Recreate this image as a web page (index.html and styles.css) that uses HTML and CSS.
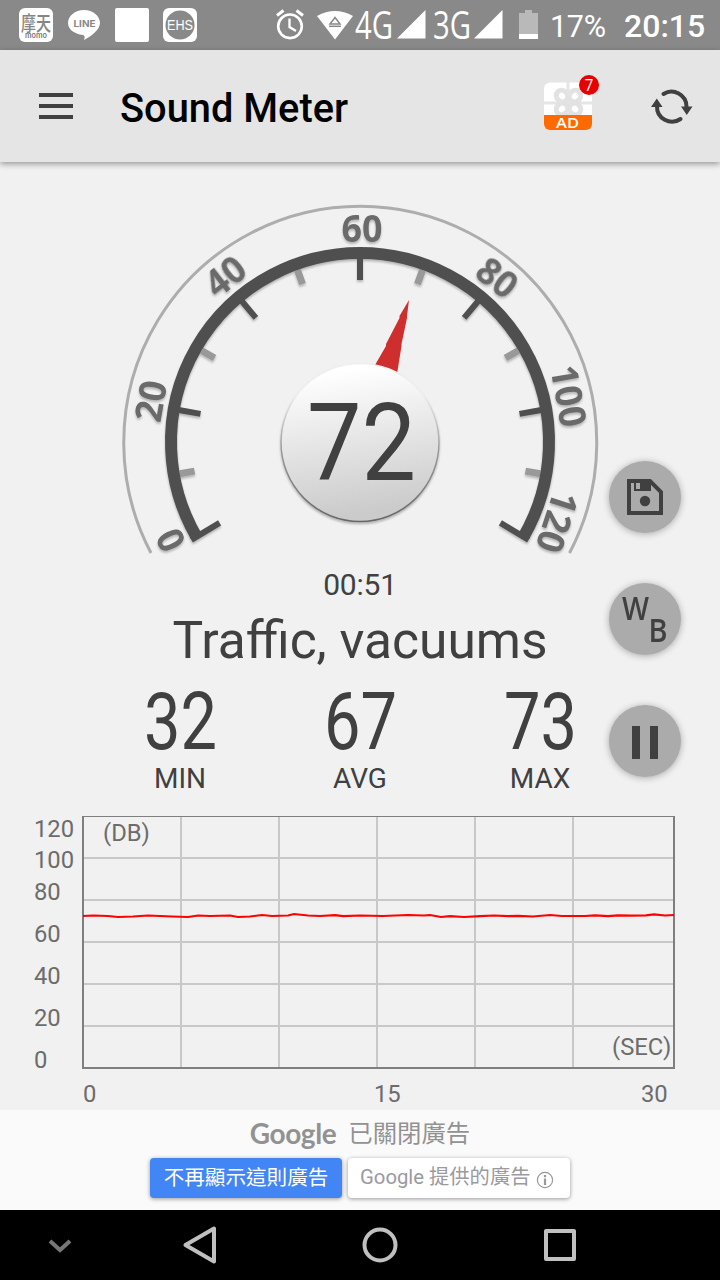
FILE: index.html
```html
<!DOCTYPE html>
<html lang="zh-Hant">
<head>
<meta charset="utf-8">
<title>Sound Meter</title>
<link rel="stylesheet" href="styles.css">
</head>
<body>
<div class="phone">
  <div class="status">
    <svg class="status-left" viewBox="0 0 260 50">
      <rect x="19" y="8" width="34" height="34" rx="6" fill="#fff"/>
      <text class="cjk" x="21" y="30.500" font-size="20" font-weight="500" fill="#858585" textLength="30" lengthAdjust="spacingAndGlyphs">摩天</text>
      <text class="inter" x="25" y="38" font-size="7.500" font-weight="600" fill="#777" textLength="22" lengthAdjust="spacingAndGlyphs">momo</text>
      <path d="M84 10c9 0 16 6 16 13 0 6-8 13-16 17 1-3 1-4-1-5-9-1-15-6-15-12 0-7 7-13 16-13z" fill="#fff"/>
      <text class="inter" x="73.500" y="27" font-size="9" font-weight="700" fill="#888" textLength="22" lengthAdjust="spacingAndGlyphs">LINE</text>
      <rect x="115" y="8" width="34" height="34" rx="2" fill="#fff"/>
      <rect x="163" y="8" width="34" height="34" rx="6" fill="#fff"/>
      <circle cx="180" cy="25" r="14.500" fill="#898989"/>
      <text class="arial" x="167" y="30" font-size="14" fill="#fff" textLength="26" lengthAdjust="spacingAndGlyphs">EHS</text>
    </svg>
    <svg class="status-right" viewBox="260 0 290 50">
      <g fill="none" stroke="#fff" stroke-width="2.600">
        <circle cx="290" cy="26.300" r="11.800"/>
        <path d="M289.500 18.500v8.500l6.500 4" stroke-width="2.300"/>
        <path d="M277 15.500l6.500-5M303 15.500l-6.500-5" stroke-width="3"/>
      </g>
      <path d="M317 16q18-10 36 0l-18 23.500z" fill="#fff"/>
      <path d="M330 24l5-6.500 5 6.500z" fill="none" stroke="#898989" stroke-width="1.500"/>
      <path d="M329 26.300h12" stroke="#898989" stroke-width="1.500"/>
      <text class="open" x="355" y="39" font-size="37.500" font-weight="500" fill="#fff" textLength="38" lengthAdjust="spacingAndGlyphs">4G</text>
      <path d="M397 38.500L425.500 10v28.500z" fill="#fff"/>
      <text class="open" x="433" y="39" font-size="37.500" font-weight="500" fill="#fff" textLength="38" lengthAdjust="spacingAndGlyphs">3G</text>
      <path d="M474 38.500L502.500 10v28.500z" fill="#fff"/>
      <path d="M525 10h7v3h6v26h-19V13h6z" fill="#b9b9b9"/>
      <path d="M519 34h19v5h-19z" fill="#fff"/>
    </svg>
    <span class="battery">17%</span>
    <span class="clock">20:15</span>
  </div>

  <header class="appbar">
    <div class="menu"><i></i><i></i><i></i></div>
    <h1>Sound Meter</h1>
    <svg class="bar-icons" viewBox="530 50 190 112">
      <rect x="544" y="82.500" width="48" height="47.500" rx="6" fill="#fff"/>
      <path d="M568 82v34M544 103h48" stroke="#e5e5e5" stroke-width="3"/>
      <g fill="#fff" stroke="#e2e2e2" stroke-width="5">
        <ellipse cx="562" cy="96" rx="6" ry="5.500" transform="rotate(45 562 96)"/>
        <ellipse cx="575" cy="96" rx="6" ry="5.500" transform="rotate(-45 575 96)"/>
        <ellipse cx="562" cy="109" rx="6" ry="5.500" transform="rotate(-45 562 109)"/>
        <ellipse cx="575" cy="109" rx="6" ry="5.500" transform="rotate(45 575 109)"/>
      </g>
      <path d="M544 115h48v9a6 6 0 0 1-6 6h-36a6 6 0 0 1-6-6z" fill="#ff6a00"/>
      <text class="open" x="556" y="128" font-size="15" font-weight="600" fill="#fff" textLength="23" lengthAdjust="spacingAndGlyphs">AD</text>
      <circle cx="589" cy="85" r="10" fill="#e60000"/>
      <text class="open" x="589" y="90.500" font-size="15.500" font-weight="500" fill="#fff" text-anchor="middle">7</text>
      <g fill="none" stroke="#404040" stroke-width="4" stroke-linecap="round">
        <path d="M663.500 94A15 15 0 0 1 686.500 106.500V108"/>
        <path d="M680.500 119A15 15 0 0 1 657 106V105"/>
      </g>
      <path d="M681 106.500h11.500l-5.700 8.500zM651 107h11.500l-5.700-8.500z" fill="#404040"/>
    </svg>
  </header>

  <main>
    <svg class="gauge" viewBox="0 162 720 400">
      <defs>
        <linearGradient id="knob" x1="0" y1="0" x2="0.150" y2="1"><stop offset="0.100" stop-color="#fff"/><stop offset="1" stop-color="#cbcbcb"/></linearGradient>
        <linearGradient id="rim" x1="0" y1="0" x2="0" y2="1"><stop offset="0.200" stop-color="#eee"/><stop offset="0.550" stop-color="#999"/><stop offset="1" stop-color="#666"/></linearGradient>
        <filter id="drop" x="-20%" y="-20%" width="140%" height="140%"><feDropShadow dx="0" dy="2" stdDeviation="1" flood-opacity="0.250"/></filter>
      </defs>
      <path d="M151 553A236.500 236.500 0 1 1 569.500 553" fill="none" stroke="#adadad" stroke-width="3"/>
      <g filter="url(#drop)">
        <g stroke="#999" stroke-width="7">
          <path id="minor" d="M360 259V274" transform="rotate(-100 360 442)"/>
          <use href="#minor" transform="rotate(40 360 442)"/>
          <use href="#minor" transform="rotate(80 360 442)"/>
          <use href="#minor" transform="rotate(120 360 442)"/>
          <use href="#minor" transform="rotate(160 360 442)"/>
          <use href="#minor" transform="rotate(200 360 442)"/>
        </g>
        <path d="M196.300 536.500A189 189 0 1 1 523.700 536.500" fill="none" stroke="#505050" stroke-width="12"/>
        <g stroke="#505050" stroke-width="6">
          <path d="M360 248V280"/>
          <path d="M360 258V280" transform="rotate(-80 360 442)"/>
          <path d="M360 258V280" transform="rotate(-40 360 442)"/>
          <path d="M360 258V280" transform="rotate(40 360 442)"/>
          <path d="M360 258V280" transform="rotate(80 360 442)"/>
          <path d="M363 247V280" transform="rotate(-121 360 442)"/>
          <path d="M357 247V280" transform="rotate(121 360 442)"/>
        </g>
      </g>
      <g class="dial open" filter="url(#drop)">
        <text transform="translate(171 540) rotate(-117)" x="-10" y="13" textLength="20" lengthAdjust="spacingAndGlyphs">0</text>
        <text transform="translate(151 401) rotate(-80)" x="-20.500" y="13" textLength="41" lengthAdjust="spacingAndGlyphs">20</text>
        <text transform="translate(225.500 276.500) rotate(-38)" x="-20.500" y="13" textLength="41" lengthAdjust="spacingAndGlyphs">40</text>
        <text transform="translate(362 228.500)" x="-20.500" y="13" textLength="41" lengthAdjust="spacingAndGlyphs">60</text>
        <text transform="translate(497 278) rotate(38)" x="-20.500" y="13" textLength="41" lengthAdjust="spacingAndGlyphs">80</text>
        <text transform="translate(568.500 396) rotate(80)" x="-31" y="13" textLength="62" lengthAdjust="spacingAndGlyphs">100</text>
        <text transform="translate(557 522) rotate(108)" x="-31" y="13" textLength="62" lengthAdjust="spacingAndGlyphs">120</text>
      </g>
      <path d="M409 300L399.500 316V318L386 344V346L375 365L397 374L401.500 346V344L407 318V316z" fill="#cf2e2e"/>
      <g filter="url(#drop)"><circle cx="360" cy="442.500" r="79" fill="url(#knob)" stroke="url(#rim)" stroke-width="1.500"/></g>
      <text class="lcd" x="307" y="480" font-size="107" textLength="109" lengthAdjust="spacingAndGlyphs">72</text>
    </svg>

    <div class="elapsed">00:51</div>
    <div class="level">Traffic, vacuums</div>
    <div class="stats">
      <div class="stat"><svg viewBox="0 0 68 60"><text class="lcd" x="-2" y="58" font-size="80" textLength="73" lengthAdjust="spacingAndGlyphs">32</text></svg><span>MIN</span></div>
      <div class="stat"><svg viewBox="0 0 68 60"><text class="lcd" x="-2" y="58" font-size="80" textLength="73" lengthAdjust="spacingAndGlyphs">67</text></svg><span>AVG</span></div>
      <div class="stat"><svg viewBox="0 0 68 60"><text class="lcd" x="-2" y="58" font-size="80" textLength="73" lengthAdjust="spacingAndGlyphs">73</text></svg><span>MAX</span></div>
    </div>

    <svg class="chart" viewBox="0 800 720 310">
      <path d="M83 858H674M83 900H674M83 942H674M83 984H674M83 1026H674M181 817V1068M279 817V1068M377 817V1068M475 817V1068M573 817V1068" stroke="#a0a0a0" stroke-opacity="0.500" stroke-width="2"/>
      <path d="M83 1069V816.500H674V1068" fill="none" stroke="#7f7f7f" stroke-width="1"/>
      <path d="M83 816V1068H674V816" fill="none" stroke="#7f7f7f" stroke-width="2"/>
      <path d="M83 916L93 915.500L108 916L118 917L133 916.500L148 915.500L160 916L172 916.500L188 917L198 915.500L210 916L230 915.500L238 917L250 916.500L262 915L272 916L288 915.500L294 914L308 915.500L320 916L335 915.200L343 916.200L360 915.500L383 916L408 915L424 915.500L430 915L441 917L450 916.200L464 917L480 916.200L494 915.500L508 916.200L518 915.800L533 916.500L550 915L562 916L585 916L595 915.300L608 916.200L618 915.300L630 915.700L646 915.300L654 914.400L665 915.500L674 915" fill="none" stroke="#f00" stroke-width="2.200"/>
      <g class="axis">
        <text x="34" y="837">120</text><text x="34" y="868">100</text><text x="34" y="900">80</text><text x="34" y="942">60</text><text x="34" y="984">40</text><text x="34" y="1026">20</text><text x="34" y="1068">0</text>
        <text x="83" y="1102">0</text><text x="374" y="1102">15</text><text x="641" y="1102">30</text>
        <text x="103" y="841">(DB)</text><text x="612" y="1055">(SEC)</text>
      </g>
    </svg>

    <div class="fabs">
      <button class="fab"><svg viewBox="0 0 72 72"><path d="M20 20H41L52 31V52H20z" fill="none" stroke="#404040" stroke-width="4"/><path d="M25 20H42V30H25z" fill="#404040"/><path d="M27 22h4v6h-4z" fill="#ababab"/><circle cx="36" cy="40" r="5.200" fill="#404040"/></svg></button>
      <button class="fab"><svg class="open" viewBox="0 0 72 72" fill="#404040" font-weight="600"><text x="13" y="37" font-size="32" textLength="27" lengthAdjust="spacingAndGlyphs">W</text><text x="39.500" y="59" font-size="32" textLength="19" lengthAdjust="spacingAndGlyphs">B</text></svg></button>
      <button class="fab"><svg viewBox="0 0 72 72"><path d="M23 21h8v33h-8zM41 21h8v33h-8z" fill="#404040"/></svg></button>
    </div>
  </main>

  <section class="ad">
    <div class="ad-title"><b>Google</b><span>已關閉廣告</span></div>
    <div class="ad-actions">
      <button class="hide">不再顯示這則廣告</button>
      <button class="why"><span>Google 提供的廣告</span><svg viewBox="0 0 18 18"><circle cx="9" cy="9" r="7.600" fill="none" stroke="#999" stroke-width="1.200"/><path d="M9 7.500V14M9 4v2.200" stroke="#999" stroke-width="2.200"/></svg></button>
    </div>
  </section>

  <nav class="navbar">
    <svg viewBox="0 1210 720 70" fill="none" stroke="#c0c0c0" stroke-width="4" stroke-linejoin="round">
      <path d="M50 1241L60 1250L70 1241" stroke="#777" stroke-linejoin="miter"/>
      <path d="M214 1228.500V1261.500L185.500 1245z"/>
      <circle cx="380" cy="1245" r="15.500"/>
      <path d="M546 1231H574V1259H546z"/>
    </svg>
  </nav>
</div>
</body>
</html>
```
FILE: styles.css
```css
* { box-sizing: border-box; }
body { margin: 0; background: #f1f1f1; font-family: Roboto, "Noto Sans CJK TC", sans-serif; color: #404040; }
svg { display: block; flex: none; }
button { border: 0; padding: 0; font: inherit; }
.phone { width: 720px; height: 1280px; display: flex; flex-direction: column; overflow: hidden; }
.open { font-family: "Open Sans", sans-serif; }
.inter { font-family: Inter, sans-serif; }
.arial { font-family: "Liberation Sans", sans-serif; }
.cjk { font-family: "Noto Sans CJK TC", sans-serif; }

.status { height: 50px; background: #898989; display: flex; color: #fff; line-height: 53px; }
.status-left { width: 260px; height: 50px; }
.status-right { width: 290px; height: 50px; }
.battery { width: 74px; font-size: 30.5px; font-weight: 400; white-space: nowrap; letter-spacing: -.3px; }
.clock { font-size: 32px; font-weight: 500; white-space: nowrap; }

.appbar { height: 112px; background: #e5e5e5; display: flex; align-items: center; box-shadow: 0 2px 6px rgba(0,0,0,.38); z-index: 1; }
.menu { width: 34px; margin-left: 39px; display: grid; gap: 7px; }
.menu i { height: 4px; background: #404040; }
.appbar h1 { margin: 6px 0 0 47px; width: 410px; font-size: 39.8px; line-height: 48px; font-weight: 500; color: #000; white-space: nowrap; }
.bar-icons { width: 190px; height: 112px; }

main { height: 948px; position: relative; display: flex; flex-direction: column; }
.gauge { width: 720px; height: 400px; }
.dial { font-size: 37px; font-weight: 700; fill: #6b6b6b; }
.lcd { font-family: Roboto, sans-serif; fill: #404040; font-weight: 400; }
.elapsed { height: 44px; line-height: 46px; font-size: 30px; letter-spacing: -.2px; text-align: center; }
.level { height: 68px; line-height: 70px; font-size: 51.5px; text-align: center; }
.stats { height: 126px; padding: 17px 90px 0; display: grid; grid-template-columns: repeat(3, 180px); }
.stat { display: flex; flex-direction: column; align-items: center; font-size: 28px; line-height: 56px; }
.stat svg { width: 68px; height: 60px; overflow: visible; }
.chart { width: 720px; height: 310px; }
.axis { font-size: 23.8px; fill: #6c6c6c; }
.fabs { position: absolute; right: 39px; top: 299px; display: grid; gap: 50px; }
.fab { width: 72px; height: 72px; border-radius: 50%; background: #ababab; box-shadow: 0 1px 7px rgba(0,0,0,.3); }

.ad { height: 100px; background: #fafafa; display: flex; flex-direction: column; align-items: center; }
.ad-title { height: 48px; padding-bottom: 5px; display: flex; align-items: center; gap: 12px; color: #929292; font-size: 24.4px; font-weight: 400; }
.ad-title b { font: 700 28px Lato, sans-serif; letter-spacing: -.4px; padding-top: 3px; }
.ad-actions { display: flex; gap: 6px; }
.ad-actions button { height: 40px; border-radius: 4px; font-size: 20.6px; box-shadow: 0 1px 4px rgba(0,0,0,.4); white-space: nowrap; line-height: 38px; }
.ad-actions .hide { width: 192px; background: #4285f4; color: #fff; }
.ad-actions .why { width: 222px; background: #fff; color: #9a9a9f; font-size: 20.3px; display: flex; align-items: flex-start; padding-left: 12px; gap: 6px; }
.why svg { width: 18px; height: 18px; margin-top: 13px; }

.navbar { height: 70px; background: #000; }
.navbar svg { width: 720px; height: 70px; }
```
